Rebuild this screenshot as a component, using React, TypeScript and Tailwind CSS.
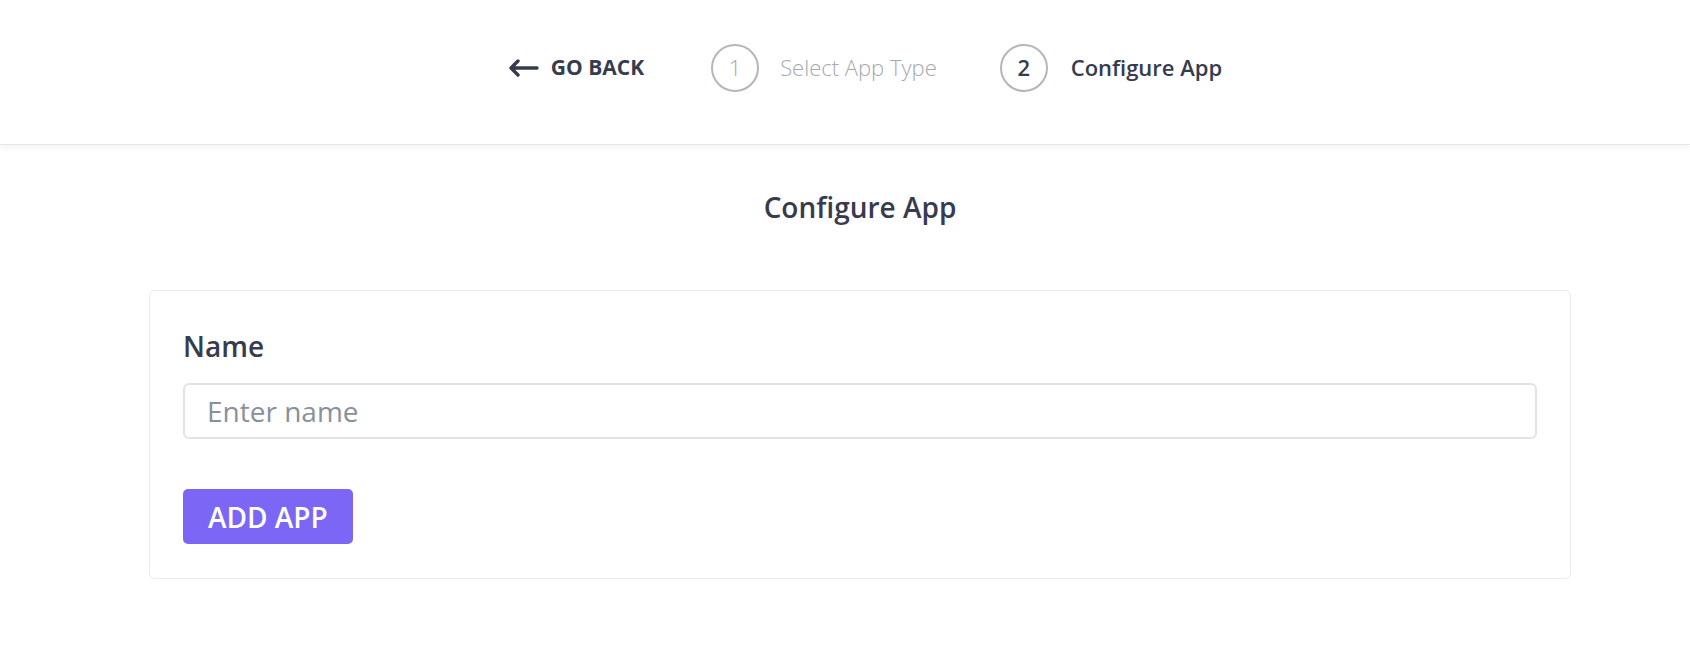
import { useState } from "react";

const Arrow = () => (
  <svg width="31" height="18" viewBox="0 0 31 18" fill="none">
    <path
      d="M29 9H3M10 2L3 9l7 7"
      stroke="#363c4e"
      strokeWidth="3.4"
      strokeLinecap="round"
      strokeLinejoin="round"
    />
  </svg>
);

const App: React.FC = () => {
  const [name, setName] = useState("");

  return (
    <div
      className="min-h-[664px] w-full bg-white text-[#363c4e]"
      style={{ fontFamily: '"Open Sans", "Liberation Sans", sans-serif' }}
    >
      {/* header with steps */}
      <div className="h-[145px] border-b border-[#e6e6e6] shadow-[0_4px_6px_rgba(0,0,0,0.04)] flex items-center justify-center pl-[40px] pb-[9px]">
        <button className="flex items-center gap-[12px] text-[21px] font-bold">
          <Arrow />
          GO BACK
        </button>
        <div className="flex items-center ml-[67px]">
          <div className="w-[48px] h-[48px] rounded-full border-2 border-[#b3b6ba] flex items-center justify-center text-[22px] font-light text-[#a5a8ad]">
            1
          </div>
          <span className="ml-[21px] text-[22px] font-light text-[#a5a8ad]">
            Select App Type
          </span>
        </div>
        <div className="flex items-center ml-[63px]">
          <div className="w-[48px] h-[48px] rounded-full border-2 border-[#b3b6ba] flex items-center justify-center text-[22px] font-semibold">
            2
          </div>
          <span className="ml-[23px] text-[22px] font-semibold">
            Configure App
          </span>
        </div>
      </div>

      <div className="pl-[149px] pr-[119px]">
        <h4 className="text-center text-[28px] font-semibold mt-[42px] mb-[63px] leading-[40px]">
          Configure App
        </h4>

        <div className="border border-[#ebebef] rounded-[6px] px-[33px] pt-[35px] pb-[34px]">
          <label className="block text-[28px] font-semibold leading-[40px] mb-[17px]">
            Name
          </label>
          <input
            value={name}
            onChange={(e) => setName(e.target.value)}
            placeholder="Enter name"
            className="w-full h-[56px] border-2 border-[#e1e3e7] rounded-[6px] px-[22px] text-[28px] placeholder:text-[#8a909a] outline-none"
          />
          <button className="mt-[50px] h-[55px] px-[25px] rounded-[5px] bg-[#7b66f6] text-white text-[28px] font-semibold">
            ADD APP
          </button>
        </div>
      </div>
    </div>
  );
};

export default App;
